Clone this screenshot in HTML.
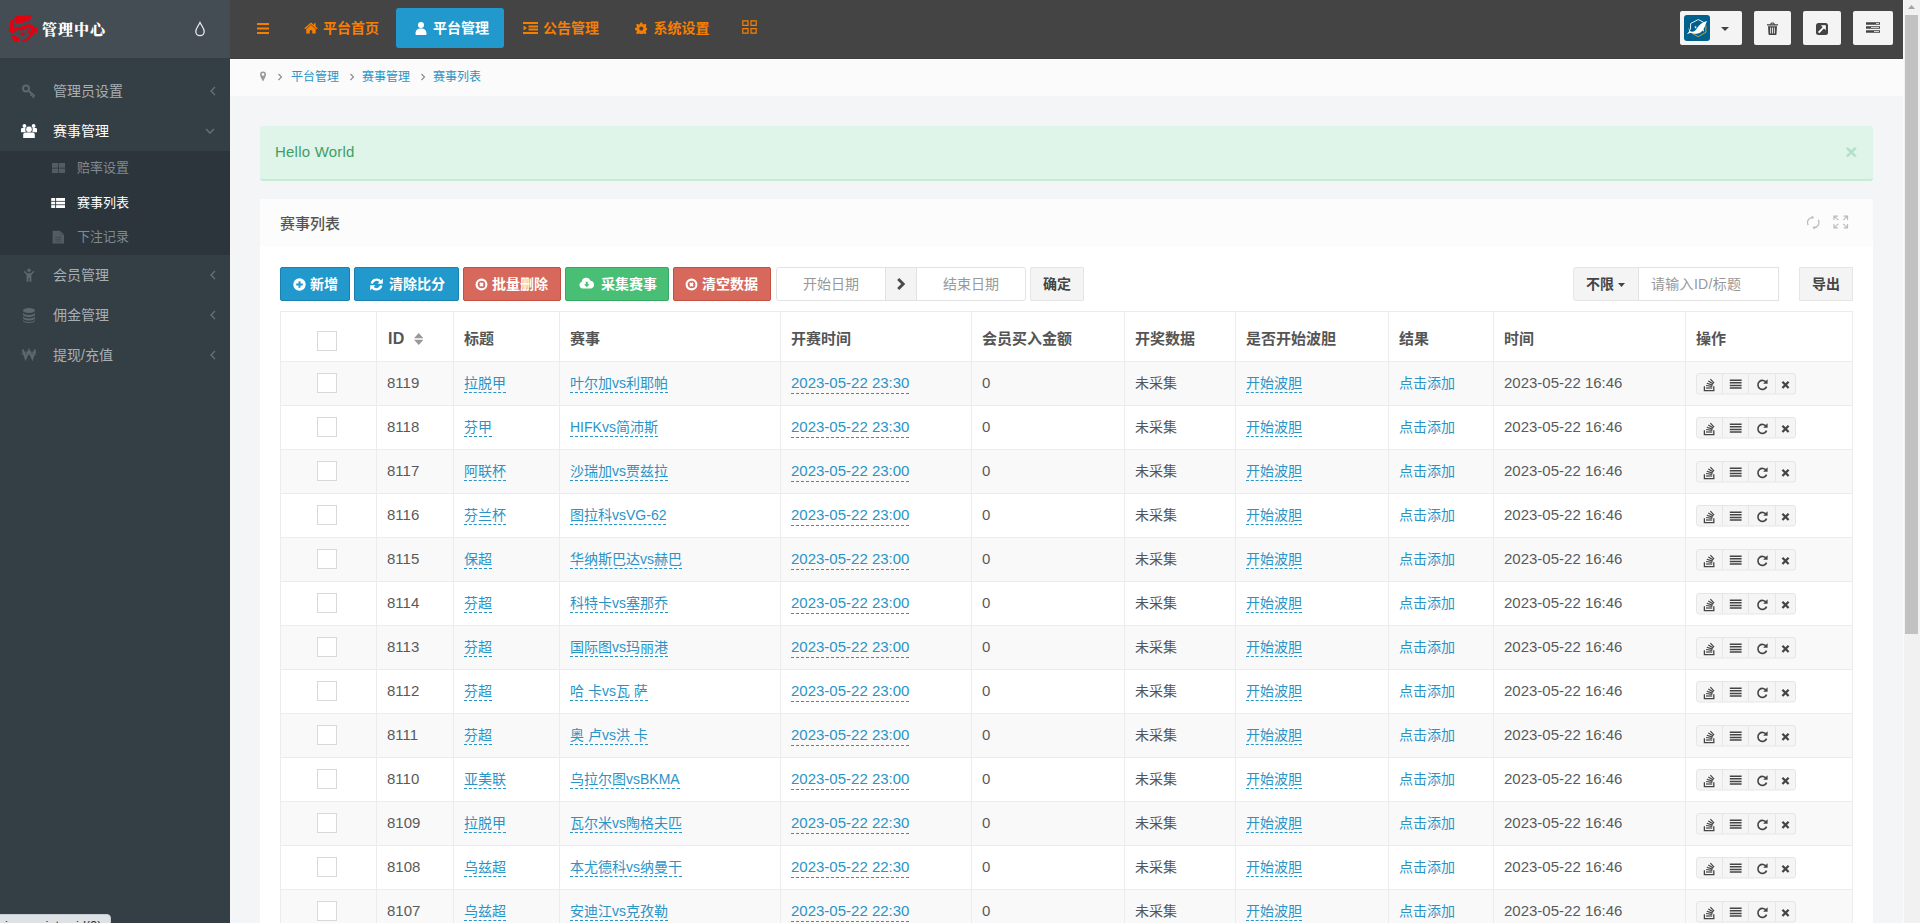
<!DOCTYPE html>
<html lang="zh-CN">
<head>
<meta charset="utf-8">
<title>管理中心</title>
<style>
*{box-sizing:border-box;}
html,body{margin:0;padding:0;}
body{width:1920px;height:923px;overflow:hidden;position:relative;background:#f4f5f7;font-family:"Liberation Sans","Noto Sans CJK SC",sans-serif;font-size:14px;color:#555;line-height:1.42857;}
a{text-decoration:none;color:#2a94c6;}
svg{display:block;}
/* sidebar */
#sidebar{position:absolute;left:0;top:0;width:230px;height:923px;background:#343e45;}
#sb-head{position:absolute;left:0;top:0;width:230px;height:58px;background:#454d54;}
#logo{position:absolute;left:8px;top:15px;width:30px;height:28px;}
#brand{position:absolute;left:42px;top:17.500px;font-family:"Liberation Serif","Noto Serif CJK SC",serif;font-weight:900;font-size:15px;letter-spacing:1px;line-height:24px;color:#fff;white-space:nowrap;}
#drop{position:absolute;left:194px;top:21px;width:12px;height:16px;}
.mi{position:absolute;left:0;width:230px;height:40px;color:#a7afb4;font-size:14px;line-height:40px;}
.mi .t{position:absolute;left:53px;top:0;}
.mi .ic{position:absolute;left:21px;top:12px;width:16px;height:16px;}
.mi .ar{position:absolute;left:209px;top:15px;width:8px;height:10px;}
.mi.act{color:#fff;}
#sub{position:absolute;left:0;top:151px;width:230px;height:104px;background:#2c353c;}
.si{position:absolute;left:0;width:230px;height:34px;color:#7f8a92;font-size:13px;line-height:34px;}
.si .t{position:absolute;left:77px;top:0;}
.si .ic{position:absolute;left:51px;top:10px;width:14px;height:14px;}
.si.act{color:#fff;}
/* topbar */
#topbar{position:absolute;left:230px;top:0;width:1673px;height:59px;background:#444;border-bottom:1px solid #3f3f3f;}
.nav{position:absolute;top:8px;height:40px;line-height:40px;color:#f77f00;font-size:14px;font-weight:bold;white-space:nowrap;}
.nav .ic{position:absolute;top:13px;width:14px;height:14px;}
.nav.act{background:#2299cc;color:#fff;border-radius:3px;}
.tb{position:absolute;top:11px;height:34px;background:#f4f4f4;border-radius:2px;}
/* breadcrumb */
#crumb{position:absolute;left:230px;top:59px;width:1673px;height:37px;background:#fbfbfb;border-top:1px solid #fff;font-size:12px;line-height:35px;color:#999;}
#crumb span,#crumb a{position:absolute;top:0;white-space:nowrap;}
/* scrollbar */
#scroll{position:absolute;left:1903px;top:0;width:17px;height:923px;background:#f1f1f1;border-left:1px solid #fafafa;}
#scroll .thumb{position:absolute;left:1px;top:15px;width:13px;height:619px;background:#c1c1c1;}
/* alert */
#alert{position:absolute;left:260px;top:126px;width:1613px;height:55px;background:#dff5e9;border-bottom:2px solid #c4ebd4;border-radius:3px;color:#3f9e66;font-size:15px;line-height:52px;padding-left:15px;letter-spacing:.22px;}
#alert .x{position:absolute;left:1584px;top:0;color:#b2e1c6;font-size:21px;font-weight:bold;letter-spacing:0;line-height:52px;left:1585px;}
/* panel */
#panel{position:absolute;left:260px;top:199px;width:1613px;height:740px;background:#fff;}
#phead{position:absolute;left:0;top:0;width:1613px;height:48px;background:#fcfcfc;border-bottom:1px solid #fefefe;font-size:15px;font-weight:500;color:#555;line-height:50px;padding-left:20px;}
.btn{position:absolute;top:68px;height:34px;border-radius:2px;color:#fff;font-weight:bold;font-size:14px;line-height:32px;white-space:nowrap;border:1px solid transparent;}
.btn .ic{position:absolute;top:9px;width:14px;height:14px;}
.btn .t{position:absolute;top:0;}
.b-blue{background:#2299cc;border-color:#1a82b0;}
.b-red{background:#d6695c;border-color:#c44f40;}
.b-green{background:#48bf74;border-color:#36a862;}
.b-def{background:#f4f4f4;border-color:#e6e6e6;color:#444;border-radius:1px;}
.inp{position:absolute;top:68px;height:34px;border:1px solid #e2e2e2;background:#fff;color:#999;font-size:14px;line-height:32px;white-space:nowrap;}
/* table */
#tbl{position:absolute;left:20px;top:112px;width:1572px;border-collapse:collapse;table-layout:fixed;font-size:14px;}
#tbl th,#tbl td{border:1px solid #ececec;padding:0 0 0 10px;text-align:left;vertical-align:middle;white-space:nowrap;overflow:hidden;}
#tbl th{height:50px;font-weight:bold;color:#555;font-size:15px;padding-top:5px;}
#tbl td{height:44px;color:#555;}
#tbl tr.odd td{background:#f9f9f9;}
#tbl td a.e{border-bottom:1px dashed #2a94c6;padding-bottom:1px;}
#tbl td .num{position:relative;top:-1px;}
#tbl td a.e.num{padding-bottom:2px;}
#tbl th .cb{position:relative;top:2px;}
#tbl td .cb{position:relative;top:-1px;}
.cb{display:block;width:20px;height:20px;border:1px solid #d9d9d9;background:#fff;margin:0 0 0 26px;}
.num{font-size:15px;}
#tbl td span.num{color:#5a5a5a;}
.ops{display:block;position:relative;width:100px;height:22px;}
#status{position:absolute;left:-1px;top:914px;width:112px;height:12px;background:#dee1e6;border:1px solid #c8cbd0;border-radius:0 4px 0 0;font-size:13px;color:#333;line-height:21px;padding-left:5px;letter-spacing:-.1px;overflow:hidden;}
</style>
</head>
<body>
<div id="sidebar">
  <div id="sb-head">
    <svg id="logo" viewBox="0 0 30 28"><g fill="#e3000f"><path d="M5.400 2.400L8.900.9 15 .65 21 .2l2.600 1.500-.85 2.200-3.450.4 2.600 1.300-.4 1.300-3.900-.4-3.100 1.300-4.300.9-3-1.300-.5-3.100z"/><path d="M2.400 5.600l-.9 7.800 4.800 3.900 2.600-1.700-2.200-1.700-.85-4.400.85-3.400-2.150-1.300z"/><path d="M7.600 11.300l3.450.8 4.350-1.700 4.750-1.300 4.350.9 2.600 3.400-.45 3.900-2.150 3.500-3.500 3.500-4.300 2.100-3.500-.4 5.200-2.600 3.500-3.500 1.700-3.400-.85-3.100-3.450-.4-3.050 1.700-3.900.9-3.450-.9-1.750-1.700z"/><path d="M26.200 12.600l3.500.4-.9 5.200-1.700-1.700z"/><path d="M.2 14.300l4.350.4 1.750 2.600-1.300 1.300-3.900-2.100z"/><path d="M11.050 18.200l5.200-.9.450 1.800-1.750 2.100-1.750-1.300z"/><path d="M1.950 19.900l4.750.9 3.900 1.700 1.750 1.800-2.150 2.600-3.500-.5-2.150-3z"/><path d="M19.300 14.700l2.600-.8.850 3.400-1.300 2.200-1.300-2.200z"/></g><g fill="#454d54"><circle cx="15.200" cy="2.600" r=".7"/><circle cx="19.600" cy="1.600" r=".6"/><circle cx="11.200" cy="4.300" r=".5"/><path d="M18.500 4.600l3.200.2-.3.800-3-.2z"/><path d="M8.200 11.200l1.100 1.100.8-1 .9 1 .9-1.100.8.900.9-1.200-5.400-.6z"/></g></svg>
    <div id="brand">管理中心</div>
    <svg id="drop" viewBox="0 0 12 16"><path d="M6 1.500C4.500 4.500 1.800 7.500 1.800 10.500a4.200 4.200 0 0 0 8.400 0C10.200 7.500 7.500 4.500 6 1.500z" fill="none" stroke="#e8eaec" stroke-width="1.300"/></svg>
  </div>
  <div class="mi" style="top:71px"><svg class="ic" viewBox="0 0 16 16"><circle cx="5" cy="5.500" r="3" fill="none" stroke="#5d676e" stroke-width="2"/><path d="M7 7.500l6.500 5.500M11 11l-1.500 1.800M13 12.800l-1.500 1.800" stroke="#5d676e" stroke-width="1.800" fill="none"/></svg><span class="t">管理员设置</span><svg class="ar" viewBox="0 0 8 10"><path d="M6 1L2 5l4 4" fill="none" stroke="#67727a" stroke-width="1.300"/></svg></div>
  <div class="mi act" style="top:111px"><svg class="ic" viewBox="0 0 16 16"><circle cx="3.400" cy="3" r="1.900" fill="#fff"/><circle cx="12.600" cy="3" r="1.900" fill="#fff"/><path d="M0 6.200c0-.8.600-1.300 1.400-1.300h3.200v4.300H0zM16 6.200c0-.8-.6-1.300-1.400-1.300h-3.200v4.300H16z" fill="#fff"/><circle cx="8" cy="6.300" r="3.300" fill="#fff" stroke="#343e45" stroke-width=".7"/><path d="M2.200 15v-3.300c0-1.400 1-2.200 2.400-2.200h6.800c1.400 0 2.400.8 2.400 2.200V15z" fill="#fff"/></svg><span class="t">赛事管理</span><svg class="ar" style="left:205px;top:16px;width:10px;height:8px" viewBox="0 0 10 8"><path d="M1 2l4 4 4-4" fill="none" stroke="#67727a" stroke-width="1.300"/></svg></div>
  <div id="sub">
    <div class="si" style="top:0px"><svg class="ic" viewBox="0 0 14 14"><path d="M1 2h6v4.700H1zM7.700 2H14v4.700H7.700zM1 7.400h6V12H1zM7.700 7.400H14V12H7.700z" fill="#525c63"/></svg><span class="t">赔率设置</span></div>
    <div class="si act" style="top:35px"><svg class="ic" viewBox="0 0 14 14"><path d="M.2 2h14v10H.2z" fill="#fff"/><path d="M.2 5.400h14M.2 8.700h14" stroke="#2c353c" stroke-width=".8"/><path d="M4.600 2v10" stroke="#2c353c" stroke-width=".9"/></svg><span class="t">赛事列表</span></div>
    <div class="si" style="top:69px"><svg class="ic" viewBox="0 0 14 14"><path d="M1.600 .8h7.400L13 4.800V13.400H1.600z" fill="#525c63"/><path d="M4.300 7.400h6M4.300 9.300h6M4.300 11.200h6" stroke="#39434a" stroke-width=".7"/><path d="M9 .8v4h4" fill="none" stroke="#444e55" stroke-width=".6"/></svg><span class="t">下注记录</span></div>
  </div>
  <div class="mi" style="top:255px"><svg class="ic" viewBox="0 0 16 16"><circle cx="8" cy="3.300" r="1.800" fill="#5d676e"/><path d="M3.600 3.800l2.600 2.500h3.600l2.600-2.500 1 1-3 3.300v6.600H8.500v-3.800h-1v3.800H5.600V8.100l-3-3.300z" fill="#5d676e"/></svg><span class="t">会员管理</span><svg class="ar" viewBox="0 0 8 10"><path d="M6 1L2 5l4 4" fill="none" stroke="#67727a" stroke-width="1.300"/></svg></div>
  <div class="mi" style="top:295px"><svg class="ic" viewBox="0 0 16 16"><ellipse cx="8" cy="3.500" rx="6" ry="2.500" fill="#5d676e"/><path d="M2 5.500c0 1.400 2.700 2.500 6 2.500s6-1.100 6-2.500v2c0 1.400-2.700 2.500-6 2.500S2 8.900 2 7.500zM2 9c0 1.400 2.700 2.500 6 2.500s6-1.100 6-2.500v2c0 1.400-2.700 2.500-6 2.500S2 12.400 2 11zM2 12.500c0 1.400 2.700 2.500 6 2.500s6-1.100 6-2.500v1c0 1.400-2.700 2.500-6 2.500s-6-1.100-6-2.500z" fill="#5d676e"/></svg><span class="t">佣金管理</span><svg class="ar" viewBox="0 0 8 10"><path d="M6 1L2 5l4 4" fill="none" stroke="#67727a" stroke-width="1.300"/></svg></div>
  <div class="mi" style="top:335px"><svg class="ic" viewBox="0 0 16 16"><path d="M1.800 2.500l2.800 8.800 3.400-7.800 3.400 7.800 2.800-8.800" fill="none" stroke="#5d676e" stroke-width="2" stroke-linejoin="miter"/><path d="M.8 5.200h14.400M.8 7.200h14.400" stroke="#5d676e" stroke-width="1"/></svg><span class="t">提现/充值</span><svg class="ar" viewBox="0 0 8 10"><path d="M6 1L2 5l4 4" fill="none" stroke="#67727a" stroke-width="1.300"/></svg></div>
</div>

<div id="topbar">
  <svg style="position:absolute;left:27px;top:23px" width="12" height="11" viewBox="0 0 12 11"><path d="M0 1h12M0 5.500h12M0 10h12" stroke="#f77f00" stroke-width="1.800"/></svg>
  <div class="nav" style="left:62px;width:100px"><svg class="ic" style="left:12px" viewBox="0 0 14 14"><path d="M7 1.500L0.300 7.200l.9 1L7 3.300l5.800 4.900.9-1L11.600 5.400V2.300H9.900v1.600zM2.300 8L7 4.100l4.700 3.900v4.500H8.200V9.300H5.800v3.200H2.300z" fill="#f77f00"/></svg><span style="position:absolute;left:31px">平台首页</span></div>
  <div class="nav act" style="left:166px;width:108px"><svg class="ic" style="left:18px" viewBox="0 0 14 14"><circle cx="7" cy="4" r="3" fill="#fff"/><path d="M1.500 13c0-4 2-5.500 5.500-5.500s5.500 1.500 5.500 5.500c0 .5-.5 1-1 1h-9c-.5 0-1-.5-1-1z" fill="#fff"/></svg><span style="position:absolute;left:37px">平台管理</span></div>
  <div class="nav" style="left:281px;width:100px"><svg class="ic" style="left:12px;width:15px" viewBox="0 0 15 14"><path d="M0 2h15M5.500 5.500H15M5.500 8.500H15M0 12h15" stroke="#f77f00" stroke-width="1.800"/><path d="M0.500 4.500L4 7 .5 9.500z" fill="#f77f00"/></svg><span style="position:absolute;left:32px">公告管理</span></div>
  <div class="nav" style="left:392px;width:100px"><svg class="ic" style="left:12.500px;top:13.500px;width:12.600px;height:12.600px" viewBox="0 0 14 14"><path d="M7 0.500l1 .1.500 1.800 1.200.5 1.700-.9 1.400 1.400-.9 1.700.5 1.200 1.800.5v2l-1.800.5-.5 1.200.9 1.700-1.400 1.400-1.700-.9-1.200.5-.5 1.800H6l-.5-1.800-1.200-.5-1.700.9-1.400-1.400.9-1.700-.5-1.200L-.2 8.800v-2l1.800-.5.5-1.200-.9-1.700 1.400-1.400 1.700.9 1.200-.5L6 .6z" fill="#f77f00"/><circle cx="7" cy="7.300" r="2.300" fill="#444"/></svg><span style="position:absolute;left:31.500px">系统设置</span></div>
  <svg style="position:absolute;left:512px;top:20px" width="15" height="14" viewBox="0 0 15 14"><path d="M.8.800h5.200v4.600H.8zM9 .8h5.200v4.600H9zM.8 8.600h5.200v4.600H.8zM9 8.600h5.200v4.600H9z" fill="none" stroke="#f77f00" stroke-width="1.200"/></svg>

  <div class="tb" style="left:1450px;width:62px"><svg style="position:absolute;left:4px;top:4px" width="26" height="26" viewBox="0 0 26 26"><rect width="26" height="26" rx="3" fill="#00618d"/><path d="M19.700 7.400L14.300 4.550 6.700 8.450 6.400 14.700" fill="none" stroke="#fff" stroke-width=".9"/><path d="M21.900 10.400v6.900l-7.600 4.400-5.800-3.100" fill="none" stroke="#e5a823" stroke-width=".9"/><path d="M23 6.100C21 6.500 18 8 16.250 9.500 14.500 11 12.500 14 11 15.800 9.500 16.800 7.500 17 6.300 16.300L4.500 12.600l.7 3.900-2.400 2.800 3.700-1.500c2 1 5 1.200 7.150.8 1.850-.6 3.850-1.800 4.950-3.200l1.300 1.300-.3-2.700c1.200-2 1.900-4 2.300-5.500z" fill="#fff"/><path d="M10.500 11.800l2-.9-.6 1.300 1-.1-1.600 1.300z" fill="#fff"/></svg><svg style="position:absolute;left:41px;top:16px" width="8" height="4" viewBox="0 0 8 4"><path d="M0 0h8L4 4z" fill="#444"/></svg></div>
  <div class="tb" style="left:1524px;width:37px"><svg style="position:absolute;left:13px;top:11px" width="11" height="13" viewBox="0 0 11 13"><path d="M0 2.300h11v1.200H0zM3.300 2.300c0-1.200.8-1.800 2.200-1.800s2.200.6 2.200 1.800h-1c0-.6-.4-.9-1.200-.9s-1.200.3-1.200.9zM1 4.200h9l-.5 7.800c0 .6-.4 1-1 1h-6c-.6 0-1-.4-1-1z" fill="#444"/><path d="M3.600 5.500v6M5.500 5.500v6M7.400 5.500v6" stroke="#f4f4f4" stroke-width=".9"/></svg></div>
  <div class="tb" style="left:1573px;width:38px"><svg style="position:absolute;left:13px;top:12px" width="12" height="12" viewBox="0 0 12 12"><rect width="12" height="12" rx="2.500" fill="#444"/><path d="M2.600 9.600L8 4.200" stroke="#fff" stroke-width="1.900"/><path d="M4.800 2.300h5v5z" fill="#fff"/></svg></div>
  <div class="tb" style="left:1623px;width:40px"><svg style="position:absolute;left:13px;top:11px" width="14" height="11" viewBox="0 0 14 11"><path d="M0 1.500h14M0 5.500h14M0 9.500h14" stroke="#444" stroke-width="2.400"/><path d="M10 1.500h3M5 5.500h8M8 9.500h5" stroke="#f4f4f4" stroke-width=".8"/></svg></div>
</div>

<div id="crumb">
  <svg style="position:absolute;left:29.300px;top:11.200px" width="8" height="10.800" viewBox="0 0 8 12"><path d="M4 .5a3.300 3.300 0 0 0-3.300 3.300C.7 6.300 4 11.500 4 11.500s3.300-5.200 3.300-7.700A3.300 3.300 0 0 0 4 .5zm0 1.800a1.500 1.500 0 1 1 0 3 1.500 1.500 0 0 1 0-3z" fill="#999"/></svg>
  <svg style="position:absolute;left:47px;top:13px" width="6" height="8" viewBox="0 0 6 8"><path d="M1.500 1l3 3-3 3" fill="none" stroke="#888" stroke-width="1.100"/></svg>
  <a style="left:61px">平台管理</a>
  <svg style="position:absolute;left:119px;top:13px" width="6" height="8" viewBox="0 0 6 8"><path d="M1.500 1l3 3-3 3" fill="none" stroke="#888" stroke-width="1.100"/></svg>
  <a style="left:132px">赛事管理</a>
  <svg style="position:absolute;left:190px;top:13px" width="6" height="8" viewBox="0 0 6 8"><path d="M1.500 1l3 3-3 3" fill="none" stroke="#888" stroke-width="1.100"/></svg>
  <a style="left:203px">赛事列表</a>
</div>

<div id="alert">Hello World<span class="x">×</span></div>

<div id="panel">
  <div id="phead">赛事列表
    <svg style="position:absolute;left:1546px;top:15.500px" width="14.500" height="15" viewBox="0 0 14 14"><path d="M2.200 9.500A5 5 0 0 1 7 2M11.800 4.500A5 5 0 0 1 7 12" fill="none" stroke="#bbb" stroke-width="1.200"/><path d="M5.500 0.500L7.800 2 5.500 3.800zM8.500 13.500L6.200 12l2.300-1.800z" fill="#bbb"/></svg>
    <svg style="position:absolute;left:1573px;top:16px" width="15.500" height="14" viewBox="0 0 16 14"><path d="M1 5V1h4M1 1l4.500 4M15 5V1h-4M15 1l-4.500 4M1 9v4h4M1 13l4.500-4M15 9v4h-4M15 13l-4.500-4" fill="none" stroke="#bbb" stroke-width="1.200"/></svg>
  </div>
  <div class="btn b-blue" style="left:20px;width:70px"><svg class="ic" style="left:12px;width:13px;height:13px;top:10px" viewBox="0 0 13 13"><circle cx="6.500" cy="6.500" r="6.200" fill="#fff"/><path d="M6.500 3.200v6.600M3.200 6.500h6.600" stroke="#2299cc" stroke-width="2"/></svg><span class="t" style="left:29px">新增</span></div>
  <div class="btn b-blue" style="left:94px;width:105px"><svg class="ic" style="left:15px;width:13px;height:13px;top:10px" viewBox="0 0 13 13"><path d="M1.800 5.500A4.900 4.900 0 0 1 10.300 3.400M11.200 7.500A4.900 4.900 0 0 1 2.700 9.600" fill="none" stroke="#fff" stroke-width="2.400"/><path d="M12.800.6v5.200H7.600zM.2 12.400V7.200h5.200z" fill="#fff"/></svg><span class="t" style="left:34px">清除比分</span></div>
  <div class="btn b-red" style="left:203px;width:98px"><svg class="ic" style="left:11px;width:13px;height:13px;top:10px" viewBox="0 0 13 13"><circle cx="6.500" cy="6.500" r="4.900" fill="none" stroke="#fff" stroke-width="2.100"/><path d="M5 5l3 3M8 5L5 8" stroke="#fff" stroke-width="1.900"/></svg><span class="t" style="left:28px">批量删除</span></div>
  <div class="btn b-green" style="left:305px;width:104px"><svg class="ic" style="left:13px;width:16px;height:12px;top:9px" viewBox="0 0 16 12"><path d="M3.600 11.500A3.400 3.400 0 0 1 2.700 4.900 4.500 4.500 0 0 1 11.400 3.700a4 4 0 0 1 .8 7.800z" fill="#fff"/><path d="M7.800 10.200L5 7.300h1.800V4.800h2v2.500h1.800z" fill="#48bf74"/></svg><span class="t" style="left:35px">采集赛事</span></div>
  <div class="btn b-red" style="left:413px;width:98px"><svg class="ic" style="left:11px;width:13px;height:13px;top:10px" viewBox="0 0 13 13"><circle cx="6.500" cy="6.500" r="4.900" fill="none" stroke="#fff" stroke-width="2.100"/><path d="M5 5l3 3M8 5L5 8" stroke="#fff" stroke-width="1.900"/></svg><span class="t" style="left:28px">清空数据</span></div>

  <div class="inp" style="left:516px;width:110px;border-radius:3px 0 0 3px;text-align:center">开始日期</div>
  <div class="inp" style="left:625px;width:32px;background:#f4f4f4"><svg style="position:absolute;left:10px;top:9px" width="10" height="14" viewBox="0 0 10 14"><path d="M2.200 2l5 5-5 5" fill="none" stroke="#4a4a4a" stroke-width="2.900"/></svg></div>
  <div class="inp" style="left:656px;width:110px;border-radius:0 3px 3px 0;text-align:center">结束日期</div>
  <div class="btn b-def" style="left:770px;width:54px"><span class="t" style="left:12px">确定</span></div>

  <div class="btn b-def" style="left:1313px;width:66px;border-radius:3px 0 0 3px"><span class="t" style="left:12px">不限</span><svg style="position:absolute;left:44px;top:15px" width="7" height="4" viewBox="0 0 7 4"><path d="M0 0h7L3.500 4z" fill="#444"/></svg></div>
  <div class="inp" style="left:1378px;width:141px;padding-left:12px;letter-spacing:.3px">请输入ID/标题</div>
  <div class="btn b-def" style="left:1539px;width:54px"><span class="t" style="left:12px">导出</span></div>

  <table id="tbl">
    <colgroup><col style="width:96px"><col style="width:77px"><col style="width:106px"><col style="width:221px"><col style="width:191px"><col style="width:153px"><col style="width:111px"><col style="width:153px"><col style="width:105px"><col style="width:192px"><col style="width:167px"></colgroup>
    <thead><tr><th><span class="cb"></span></th><th><span style="font-size:16px;letter-spacing:.4px;margin-left:1px">ID</span><svg style="display:inline-block;margin-left:9px;vertical-align:-1px" width="9.500" height="12" viewBox="0 0 9.500 12"><path d="M4.750 0L9.500 5.200H0zM4.750 12L0 6.800h9.500z" fill="#999"/></svg></th><th>标题</th><th>赛事</th><th>开赛时间</th><th>会员买入金额</th><th>开奖数据</th><th>是否开始波胆</th><th>结果</th><th>时间</th><th>操作</th></tr></thead>
    <tbody>
<tr class="odd"><td><span class="cb"></span></td><td><span class="num">8119</span></td><td><a class="e">拉脱甲</a></td><td><a class="e">叶尔加vs利耶帕</a></td><td><a class="e num">2023-05-22 23:30</a></td><td><span class="num">0</span></td><td>未采集</td><td><a class="e">开始波胆</a></td><td><a>点击添加</a></td><td><span class="num">2023-05-22 16:46</span></td><td><span class="ops"><svg width="100" height="22" viewBox="0 0 100 22"><rect x="0.5" y="0.5" width="99" height="20.500" rx="2.500" fill="#f5f5f5" stroke="#e6e6e6"/><path d="M26.500 1v19.500M52.500 1v19.500M79.500 1v19.500" stroke="#e6e6e6"/><path d="M8.400 13.200v4.400h9.400v-4.400" fill="none" stroke="#444" stroke-width="1.300"/><path d="M10 15h6.200" stroke="#8a8a8a" stroke-width="2"/><path d="M10.100 12.500l6.200.9M10.800 10.200l5.900 1.900M12.300 7.900l5 3.100M14.400 6.100l3.700 4.100" stroke="#444" stroke-width="1.200"/><path d="M33.800 7.200h11.800M33.800 9.800h11.800M33.800 12.400h11.800M33.800 15h11.800" stroke="#444" stroke-width="1.500"/><path d="M70.300 9.600A4.500 4.500 0 1 0 70.600 13.600" fill="none" stroke="#444" stroke-width="1.600"/><path d="M71.600 6.200v4.500h-4.500z" fill="#444"/><path d="M86.400 8.800l6.200 6.200M92.600 8.800l-6.200 6.200" stroke="#444" stroke-width="2.300"/></svg></span></td></tr>
<tr><td><span class="cb"></span></td><td><span class="num">8118</span></td><td><a class="e">芬甲</a></td><td><a class="e">HIFKvs简沛斯</a></td><td><a class="e num">2023-05-22 23:30</a></td><td><span class="num">0</span></td><td>未采集</td><td><a class="e">开始波胆</a></td><td><a>点击添加</a></td><td><span class="num">2023-05-22 16:46</span></td><td><span class="ops"><svg width="100" height="22" viewBox="0 0 100 22"><rect x="0.5" y="0.5" width="99" height="20.500" rx="2.500" fill="#f5f5f5" stroke="#e6e6e6"/><path d="M26.500 1v19.500M52.500 1v19.500M79.500 1v19.500" stroke="#e6e6e6"/><path d="M8.400 13.200v4.400h9.400v-4.400" fill="none" stroke="#444" stroke-width="1.300"/><path d="M10 15h6.200" stroke="#8a8a8a" stroke-width="2"/><path d="M10.100 12.500l6.200.9M10.800 10.200l5.900 1.900M12.300 7.900l5 3.100M14.400 6.100l3.700 4.100" stroke="#444" stroke-width="1.200"/><path d="M33.800 7.200h11.800M33.800 9.800h11.800M33.800 12.400h11.800M33.800 15h11.800" stroke="#444" stroke-width="1.500"/><path d="M70.300 9.600A4.500 4.500 0 1 0 70.600 13.600" fill="none" stroke="#444" stroke-width="1.600"/><path d="M71.600 6.200v4.500h-4.500z" fill="#444"/><path d="M86.400 8.800l6.200 6.200M92.600 8.800l-6.200 6.200" stroke="#444" stroke-width="2.300"/></svg></span></td></tr>
<tr class="odd"><td><span class="cb"></span></td><td><span class="num">8117</span></td><td><a class="e">阿联杯</a></td><td><a class="e">沙瑞加vs贾兹拉</a></td><td><a class="e num">2023-05-22 23:00</a></td><td><span class="num">0</span></td><td>未采集</td><td><a class="e">开始波胆</a></td><td><a>点击添加</a></td><td><span class="num">2023-05-22 16:46</span></td><td><span class="ops"><svg width="100" height="22" viewBox="0 0 100 22"><rect x="0.5" y="0.5" width="99" height="20.500" rx="2.500" fill="#f5f5f5" stroke="#e6e6e6"/><path d="M26.500 1v19.500M52.500 1v19.500M79.500 1v19.500" stroke="#e6e6e6"/><path d="M8.400 13.200v4.400h9.400v-4.400" fill="none" stroke="#444" stroke-width="1.300"/><path d="M10 15h6.200" stroke="#8a8a8a" stroke-width="2"/><path d="M10.100 12.500l6.200.9M10.800 10.200l5.900 1.900M12.300 7.900l5 3.100M14.400 6.100l3.700 4.100" stroke="#444" stroke-width="1.200"/><path d="M33.800 7.200h11.800M33.800 9.800h11.800M33.800 12.400h11.800M33.800 15h11.800" stroke="#444" stroke-width="1.500"/><path d="M70.300 9.600A4.500 4.500 0 1 0 70.600 13.600" fill="none" stroke="#444" stroke-width="1.600"/><path d="M71.600 6.200v4.500h-4.500z" fill="#444"/><path d="M86.400 8.800l6.200 6.200M92.600 8.800l-6.200 6.200" stroke="#444" stroke-width="2.300"/></svg></span></td></tr>
<tr><td><span class="cb"></span></td><td><span class="num">8116</span></td><td><a class="e">芬兰杯</a></td><td><a class="e">图拉科vsVG-62</a></td><td><a class="e num">2023-05-22 23:00</a></td><td><span class="num">0</span></td><td>未采集</td><td><a class="e">开始波胆</a></td><td><a>点击添加</a></td><td><span class="num">2023-05-22 16:46</span></td><td><span class="ops"><svg width="100" height="22" viewBox="0 0 100 22"><rect x="0.5" y="0.5" width="99" height="20.500" rx="2.500" fill="#f5f5f5" stroke="#e6e6e6"/><path d="M26.500 1v19.500M52.500 1v19.500M79.500 1v19.500" stroke="#e6e6e6"/><path d="M8.400 13.200v4.400h9.400v-4.400" fill="none" stroke="#444" stroke-width="1.300"/><path d="M10 15h6.200" stroke="#8a8a8a" stroke-width="2"/><path d="M10.100 12.500l6.200.9M10.800 10.200l5.900 1.900M12.300 7.900l5 3.100M14.400 6.100l3.700 4.100" stroke="#444" stroke-width="1.200"/><path d="M33.800 7.200h11.800M33.800 9.800h11.800M33.800 12.400h11.800M33.800 15h11.800" stroke="#444" stroke-width="1.500"/><path d="M70.300 9.600A4.500 4.500 0 1 0 70.600 13.600" fill="none" stroke="#444" stroke-width="1.600"/><path d="M71.600 6.200v4.500h-4.500z" fill="#444"/><path d="M86.400 8.800l6.200 6.200M92.600 8.800l-6.200 6.200" stroke="#444" stroke-width="2.300"/></svg></span></td></tr>
<tr class="odd"><td><span class="cb"></span></td><td><span class="num">8115</span></td><td><a class="e">保超</a></td><td><a class="e">华纳斯巴达vs赫巴</a></td><td><a class="e num">2023-05-22 23:00</a></td><td><span class="num">0</span></td><td>未采集</td><td><a class="e">开始波胆</a></td><td><a>点击添加</a></td><td><span class="num">2023-05-22 16:46</span></td><td><span class="ops"><svg width="100" height="22" viewBox="0 0 100 22"><rect x="0.5" y="0.5" width="99" height="20.500" rx="2.500" fill="#f5f5f5" stroke="#e6e6e6"/><path d="M26.500 1v19.500M52.500 1v19.500M79.500 1v19.500" stroke="#e6e6e6"/><path d="M8.400 13.200v4.400h9.400v-4.400" fill="none" stroke="#444" stroke-width="1.300"/><path d="M10 15h6.200" stroke="#8a8a8a" stroke-width="2"/><path d="M10.100 12.500l6.200.9M10.800 10.200l5.900 1.900M12.300 7.900l5 3.100M14.400 6.100l3.700 4.100" stroke="#444" stroke-width="1.200"/><path d="M33.800 7.200h11.800M33.800 9.800h11.800M33.800 12.400h11.800M33.800 15h11.800" stroke="#444" stroke-width="1.500"/><path d="M70.300 9.600A4.500 4.500 0 1 0 70.600 13.600" fill="none" stroke="#444" stroke-width="1.600"/><path d="M71.600 6.200v4.500h-4.500z" fill="#444"/><path d="M86.400 8.800l6.200 6.200M92.600 8.800l-6.200 6.200" stroke="#444" stroke-width="2.300"/></svg></span></td></tr>
<tr><td><span class="cb"></span></td><td><span class="num">8114</span></td><td><a class="e">芬超</a></td><td><a class="e">科特卡vs塞那乔</a></td><td><a class="e num">2023-05-22 23:00</a></td><td><span class="num">0</span></td><td>未采集</td><td><a class="e">开始波胆</a></td><td><a>点击添加</a></td><td><span class="num">2023-05-22 16:46</span></td><td><span class="ops"><svg width="100" height="22" viewBox="0 0 100 22"><rect x="0.5" y="0.5" width="99" height="20.500" rx="2.500" fill="#f5f5f5" stroke="#e6e6e6"/><path d="M26.500 1v19.500M52.500 1v19.500M79.500 1v19.500" stroke="#e6e6e6"/><path d="M8.400 13.200v4.400h9.400v-4.400" fill="none" stroke="#444" stroke-width="1.300"/><path d="M10 15h6.200" stroke="#8a8a8a" stroke-width="2"/><path d="M10.100 12.500l6.200.9M10.800 10.200l5.900 1.900M12.300 7.900l5 3.100M14.400 6.100l3.700 4.100" stroke="#444" stroke-width="1.200"/><path d="M33.800 7.200h11.800M33.800 9.800h11.800M33.800 12.400h11.800M33.800 15h11.800" stroke="#444" stroke-width="1.500"/><path d="M70.300 9.600A4.500 4.500 0 1 0 70.600 13.600" fill="none" stroke="#444" stroke-width="1.600"/><path d="M71.600 6.200v4.500h-4.500z" fill="#444"/><path d="M86.400 8.800l6.200 6.200M92.600 8.800l-6.200 6.200" stroke="#444" stroke-width="2.300"/></svg></span></td></tr>
<tr class="odd"><td><span class="cb"></span></td><td><span class="num">8113</span></td><td><a class="e">芬超</a></td><td><a class="e">国际图vs玛丽港</a></td><td><a class="e num">2023-05-22 23:00</a></td><td><span class="num">0</span></td><td>未采集</td><td><a class="e">开始波胆</a></td><td><a>点击添加</a></td><td><span class="num">2023-05-22 16:46</span></td><td><span class="ops"><svg width="100" height="22" viewBox="0 0 100 22"><rect x="0.5" y="0.5" width="99" height="20.500" rx="2.500" fill="#f5f5f5" stroke="#e6e6e6"/><path d="M26.500 1v19.500M52.500 1v19.500M79.500 1v19.500" stroke="#e6e6e6"/><path d="M8.400 13.200v4.400h9.400v-4.400" fill="none" stroke="#444" stroke-width="1.300"/><path d="M10 15h6.200" stroke="#8a8a8a" stroke-width="2"/><path d="M10.100 12.500l6.200.9M10.800 10.200l5.900 1.900M12.300 7.900l5 3.100M14.400 6.100l3.700 4.100" stroke="#444" stroke-width="1.200"/><path d="M33.800 7.200h11.800M33.800 9.800h11.800M33.800 12.400h11.800M33.800 15h11.800" stroke="#444" stroke-width="1.500"/><path d="M70.300 9.600A4.500 4.500 0 1 0 70.600 13.600" fill="none" stroke="#444" stroke-width="1.600"/><path d="M71.600 6.200v4.500h-4.500z" fill="#444"/><path d="M86.400 8.800l6.200 6.200M92.600 8.800l-6.200 6.200" stroke="#444" stroke-width="2.300"/></svg></span></td></tr>
<tr><td><span class="cb"></span></td><td><span class="num">8112</span></td><td><a class="e">芬超</a></td><td><a class="e">哈 卡vs瓦 萨</a></td><td><a class="e num">2023-05-22 23:00</a></td><td><span class="num">0</span></td><td>未采集</td><td><a class="e">开始波胆</a></td><td><a>点击添加</a></td><td><span class="num">2023-05-22 16:46</span></td><td><span class="ops"><svg width="100" height="22" viewBox="0 0 100 22"><rect x="0.5" y="0.5" width="99" height="20.500" rx="2.500" fill="#f5f5f5" stroke="#e6e6e6"/><path d="M26.500 1v19.500M52.500 1v19.500M79.500 1v19.500" stroke="#e6e6e6"/><path d="M8.400 13.200v4.400h9.400v-4.400" fill="none" stroke="#444" stroke-width="1.300"/><path d="M10 15h6.200" stroke="#8a8a8a" stroke-width="2"/><path d="M10.100 12.500l6.200.9M10.800 10.200l5.900 1.900M12.300 7.900l5 3.100M14.400 6.100l3.700 4.100" stroke="#444" stroke-width="1.200"/><path d="M33.800 7.200h11.800M33.800 9.800h11.800M33.800 12.400h11.800M33.800 15h11.800" stroke="#444" stroke-width="1.500"/><path d="M70.300 9.600A4.500 4.500 0 1 0 70.600 13.600" fill="none" stroke="#444" stroke-width="1.600"/><path d="M71.600 6.200v4.500h-4.500z" fill="#444"/><path d="M86.400 8.800l6.200 6.200M92.600 8.800l-6.200 6.200" stroke="#444" stroke-width="2.300"/></svg></span></td></tr>
<tr class="odd"><td><span class="cb"></span></td><td><span class="num">8111</span></td><td><a class="e">芬超</a></td><td><a class="e">奥 卢vs洪 卡</a></td><td><a class="e num">2023-05-22 23:00</a></td><td><span class="num">0</span></td><td>未采集</td><td><a class="e">开始波胆</a></td><td><a>点击添加</a></td><td><span class="num">2023-05-22 16:46</span></td><td><span class="ops"><svg width="100" height="22" viewBox="0 0 100 22"><rect x="0.5" y="0.5" width="99" height="20.500" rx="2.500" fill="#f5f5f5" stroke="#e6e6e6"/><path d="M26.500 1v19.500M52.500 1v19.500M79.500 1v19.500" stroke="#e6e6e6"/><path d="M8.400 13.200v4.400h9.400v-4.400" fill="none" stroke="#444" stroke-width="1.300"/><path d="M10 15h6.200" stroke="#8a8a8a" stroke-width="2"/><path d="M10.100 12.500l6.200.9M10.800 10.200l5.900 1.900M12.300 7.900l5 3.100M14.400 6.100l3.700 4.100" stroke="#444" stroke-width="1.200"/><path d="M33.800 7.200h11.800M33.800 9.800h11.800M33.800 12.400h11.800M33.800 15h11.800" stroke="#444" stroke-width="1.500"/><path d="M70.300 9.600A4.500 4.500 0 1 0 70.600 13.600" fill="none" stroke="#444" stroke-width="1.600"/><path d="M71.600 6.200v4.500h-4.500z" fill="#444"/><path d="M86.400 8.800l6.200 6.200M92.600 8.800l-6.200 6.200" stroke="#444" stroke-width="2.300"/></svg></span></td></tr>
<tr><td><span class="cb"></span></td><td><span class="num">8110</span></td><td><a class="e">亚美联</a></td><td><a class="e">乌拉尔图vsBKMA</a></td><td><a class="e num">2023-05-22 23:00</a></td><td><span class="num">0</span></td><td>未采集</td><td><a class="e">开始波胆</a></td><td><a>点击添加</a></td><td><span class="num">2023-05-22 16:46</span></td><td><span class="ops"><svg width="100" height="22" viewBox="0 0 100 22"><rect x="0.5" y="0.5" width="99" height="20.500" rx="2.500" fill="#f5f5f5" stroke="#e6e6e6"/><path d="M26.500 1v19.500M52.500 1v19.500M79.500 1v19.500" stroke="#e6e6e6"/><path d="M8.400 13.200v4.400h9.400v-4.400" fill="none" stroke="#444" stroke-width="1.300"/><path d="M10 15h6.200" stroke="#8a8a8a" stroke-width="2"/><path d="M10.100 12.500l6.200.9M10.800 10.200l5.900 1.900M12.300 7.900l5 3.100M14.400 6.100l3.700 4.100" stroke="#444" stroke-width="1.200"/><path d="M33.800 7.200h11.800M33.800 9.800h11.800M33.800 12.400h11.800M33.800 15h11.800" stroke="#444" stroke-width="1.500"/><path d="M70.300 9.600A4.500 4.500 0 1 0 70.600 13.600" fill="none" stroke="#444" stroke-width="1.600"/><path d="M71.600 6.200v4.500h-4.500z" fill="#444"/><path d="M86.400 8.800l6.200 6.200M92.600 8.800l-6.200 6.200" stroke="#444" stroke-width="2.300"/></svg></span></td></tr>
<tr class="odd"><td><span class="cb"></span></td><td><span class="num">8109</span></td><td><a class="e">拉脱甲</a></td><td><a class="e">瓦尔米vs陶格夫匹</a></td><td><a class="e num">2023-05-22 22:30</a></td><td><span class="num">0</span></td><td>未采集</td><td><a class="e">开始波胆</a></td><td><a>点击添加</a></td><td><span class="num">2023-05-22 16:46</span></td><td><span class="ops"><svg width="100" height="22" viewBox="0 0 100 22"><rect x="0.5" y="0.5" width="99" height="20.500" rx="2.500" fill="#f5f5f5" stroke="#e6e6e6"/><path d="M26.500 1v19.500M52.500 1v19.500M79.500 1v19.500" stroke="#e6e6e6"/><path d="M8.400 13.200v4.400h9.400v-4.400" fill="none" stroke="#444" stroke-width="1.300"/><path d="M10 15h6.200" stroke="#8a8a8a" stroke-width="2"/><path d="M10.100 12.500l6.200.9M10.800 10.200l5.900 1.900M12.300 7.900l5 3.100M14.400 6.100l3.700 4.100" stroke="#444" stroke-width="1.200"/><path d="M33.800 7.200h11.800M33.800 9.800h11.800M33.800 12.400h11.800M33.800 15h11.800" stroke="#444" stroke-width="1.500"/><path d="M70.300 9.600A4.500 4.500 0 1 0 70.600 13.600" fill="none" stroke="#444" stroke-width="1.600"/><path d="M71.600 6.200v4.500h-4.500z" fill="#444"/><path d="M86.400 8.800l6.200 6.200M92.600 8.800l-6.200 6.200" stroke="#444" stroke-width="2.300"/></svg></span></td></tr>
<tr><td><span class="cb"></span></td><td><span class="num">8108</span></td><td><a class="e">乌兹超</a></td><td><a class="e">本尤德科vs纳曼干</a></td><td><a class="e num">2023-05-22 22:30</a></td><td><span class="num">0</span></td><td>未采集</td><td><a class="e">开始波胆</a></td><td><a>点击添加</a></td><td><span class="num">2023-05-22 16:46</span></td><td><span class="ops"><svg width="100" height="22" viewBox="0 0 100 22"><rect x="0.5" y="0.5" width="99" height="20.500" rx="2.500" fill="#f5f5f5" stroke="#e6e6e6"/><path d="M26.500 1v19.500M52.500 1v19.500M79.500 1v19.500" stroke="#e6e6e6"/><path d="M8.400 13.200v4.400h9.400v-4.400" fill="none" stroke="#444" stroke-width="1.300"/><path d="M10 15h6.200" stroke="#8a8a8a" stroke-width="2"/><path d="M10.100 12.500l6.200.9M10.800 10.200l5.900 1.900M12.300 7.900l5 3.100M14.400 6.100l3.700 4.100" stroke="#444" stroke-width="1.200"/><path d="M33.800 7.200h11.800M33.800 9.800h11.800M33.800 12.400h11.800M33.800 15h11.800" stroke="#444" stroke-width="1.500"/><path d="M70.300 9.600A4.500 4.500 0 1 0 70.600 13.600" fill="none" stroke="#444" stroke-width="1.600"/><path d="M71.600 6.200v4.500h-4.500z" fill="#444"/><path d="M86.400 8.800l6.200 6.200M92.600 8.800l-6.200 6.200" stroke="#444" stroke-width="2.300"/></svg></span></td></tr>
<tr class="odd"><td><span class="cb"></span></td><td><span class="num">8107</span></td><td><a class="e">乌兹超</a></td><td><a class="e">安迪江vs克孜勒</a></td><td><a class="e num">2023-05-22 22:30</a></td><td><span class="num">0</span></td><td>未采集</td><td><a class="e">开始波胆</a></td><td><a>点击添加</a></td><td><span class="num">2023-05-22 16:46</span></td><td><span class="ops"><svg width="100" height="22" viewBox="0 0 100 22"><rect x="0.5" y="0.5" width="99" height="20.500" rx="2.500" fill="#f5f5f5" stroke="#e6e6e6"/><path d="M26.500 1v19.500M52.500 1v19.500M79.500 1v19.500" stroke="#e6e6e6"/><path d="M8.400 13.200v4.400h9.400v-4.400" fill="none" stroke="#444" stroke-width="1.300"/><path d="M10 15h6.200" stroke="#8a8a8a" stroke-width="2"/><path d="M10.100 12.500l6.200.9M10.800 10.200l5.900 1.900M12.300 7.900l5 3.100M14.400 6.100l3.700 4.100" stroke="#444" stroke-width="1.200"/><path d="M33.800 7.200h11.800M33.800 9.800h11.800M33.800 12.400h11.800M33.800 15h11.800" stroke="#444" stroke-width="1.500"/><path d="M70.300 9.600A4.500 4.500 0 1 0 70.600 13.600" fill="none" stroke="#444" stroke-width="1.600"/><path d="M71.600 6.200v4.500h-4.500z" fill="#444"/><path d="M86.400 8.800l6.200 6.200M92.600 8.800l-6.200 6.200" stroke="#444" stroke-width="2.300"/></svg></span></td></tr>
    </tbody>
  </table>
</div>

<div id="scroll"><svg style="position:absolute;left:4px;top:5px" width="7" height="4" viewBox="0 0 7 4"><path d="M0 4l3.500-4L7 4z" fill="#a3a3a3"/></svg><div class="thumb"></div></div>
<div id="status">javascript:void(0);</div>

</body>
</html>
